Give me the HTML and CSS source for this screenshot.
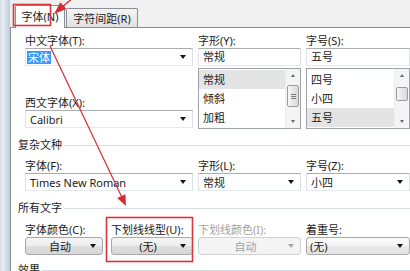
FILE: index.html
```html
<!DOCTYPE html>
<html lang="zh-CN">
<head>
<meta charset="utf-8">
<title>字体</title>
<link rel="stylesheet" href="styles.css">
</head>
<body>
<div class="window">
  <div class="frame-edge"></div>
  <div class="dialog">
    <div class="tabstrip">
      <div class="tab tab-font">字体(N)</div>
      <div class="tab tab-spacing">字符间距(R)</div>
    </div>
    <div class="panel">
      <div class="grid3">
        <div class="col">
          <div class="lbl">中文字体(T):</div>
          <div class="combo edit"><span class="sel">宋体</span><span class="arr"></span></div>
          <div class="lbl gap-x">西文字体(X):</div>
          <div class="combo edit"><span class="val">Calibri</span><span class="arr"></span></div>
        </div>
        <div class="col">
          <div class="lbl">字形(Y):</div>
          <div class="textbox">常规</div>
          <div class="listbox">
            <div class="items">
              <div class="hl">常规</div>
              <div>倾斜</div>
              <div>加粗</div>
            </div>
            <div class="vscroll">
              <div class="sb-btn"><span class="tri-up"></span></div>
              <div class="thumb thumb-big"><span class="grip"></span></div>
              <div class="sb-fill"></div>
              <div class="sb-btn"><span class="tri-down"></span></div>
            </div>
          </div>
        </div>
        <div class="col">
          <div class="lbl">字号(S):</div>
          <div class="textbox">五号</div>
          <div class="listbox">
            <div class="items">
              <div>四号</div>
              <div>小四</div>
              <div class="hl">五号</div>
            </div>
            <div class="vscroll">
              <div class="sb-btn"><span class="tri-up"></span></div>
              <div class="thumb thumb-small"></div>
              <div class="sb-fill"></div>
              <div class="sb-btn"><span class="tri-down"></span></div>
            </div>
          </div>
        </div>
      </div>

      <div class="group g-complex">复杂文种</div>
      <div class="grid3 sec2">
        <div class="col">
          <div class="lbl">字体(F):</div>
          <div class="combo edit"><span class="val">Times New Roman</span><span class="arr"></span></div>
        </div>
        <div class="col">
          <div class="lbl">字形(L):</div>
          <div class="combo edit"><span class="val">常规</span><span class="arr"></span></div>
        </div>
        <div class="col">
          <div class="lbl">字号(Z):</div>
          <div class="combo edit"><span class="val">小四</span><span class="arr"></span></div>
        </div>
      </div>

      <div class="group g-all">所有文字</div>
      <div class="grid4">
        <div class="col">
          <div class="lbl">字体颜色(C):</div>
          <div class="combo btn"><span class="txt">自动</span><span class="arr"></span></div>
        </div>
        <div class="col col-under">
          <div class="lbl">下划线线型(U):</div>
          <div class="combo btn"><span class="txt">(无)</span><span class="arr"></span></div>
        </div>
        <div class="col">
          <div class="lbl dim">下划线颜色(I):</div>
          <div class="combo btn disabled"><span class="txt">自动</span><span class="arr"></span></div>
        </div>
        <div class="col">
          <div class="lbl">着重号:</div>
          <div class="combo btn left"><span class="txt">(无)</span><span class="arr"></span></div>
        </div>
      </div>

      <div class="group g-effect">效果</div>
    </div>
  </div>

  <svg class="annot" width="410" height="271" viewBox="0 0 410 271">
    <rect x="13.5" y="4.5" width="37" height="21" fill="none" stroke="#d9353b" stroke-width="1.6"/>
    <rect x="106.5" y="217.5" width="86" height="44" fill="none" stroke="#d9353b" stroke-width="1.6"/>
    <line x1="73" y1="-2" x2="62" y2="7" stroke="#d62b30" stroke-width="1.3"/>
    <polygon points="54,14 66.3,9.1 60.3,2.3" fill="#d62b30"/>
    <line x1="50" y1="46" x2="121.5" y2="196.5" stroke="#d62b30" stroke-width="1.2"/>
    <polygon points="126,206 125.4,194.2 117.2,198" fill="#d62b30"/>
  </svg>
</div>
</body>
</html>
```

FILE: styles.css
```css
html, body {
  margin: 0;
  padding: 0;
}

body {
  width: 410px;
  height: 271px;
  overflow: hidden;
  background: #ffffff;
  color: #1b1b1b;
  font-family: "Noto Sans", "Noto Sans CJK SC", sans-serif;
  font-size: 11px;
}

.window {
  position: relative;
  display: flex;
  width: 410px;
  height: 271px;
}

.frame-edge {
  flex: none;
  width: 10px;
  background: linear-gradient(to right, #d3dce6 0, #e8edf2 3px, #d7e0e9 6px, #c2cfdc 9px, #c2cfdc 10px);
}

.dialog {
  flex: 1;
  min-width: 0;
  display: flex;
  flex-direction: column;
}

/* tabs */
.tabstrip {
  flex: none;
  height: 27px;
  display: flex;
  align-items: flex-end;
  padding-left: 5px;
  background: #f0f0f0;
}

.tab {
  box-sizing: border-box;
  border: 1px solid #898c95;
  border-bottom: none;
  text-align: center;
  white-space: nowrap;
}

.tab-font {
  width: 50px;
  height: 23px;
  line-height: 22px;
  margin-bottom: -1px;
  background: #ffffff;
  border-radius: 2px 2px 0 0;
  position: relative;
  z-index: 1;
}

.tab-spacing {
  width: 72px;
  height: 19px;
  line-height: 19px;
  margin-left: 1px;
  background: linear-gradient(#f4f4f4, #e1e1e1);
  border-radius: 2px 2px 0 0;
}

/* panel */
.panel {
  flex: 1;
  background: #ffffff;
  border-top: 1px solid #898c95;
  border-left: 1px solid #898c95;
  padding: 5px 0 0 14px;
}

.grid3 {
  display: grid;
  grid-template-columns: 168px 103px 104px;
  column-gap: 5px;
}

.grid4 {
  display: grid;
  grid-template-columns: 78px 85px 103px 104px;
  column-gap: 5px;
  margin-top: 7px;
}

.sec2 {
  margin-top: 6px;
}

.col {
  display: flex;
  flex-direction: column;
  min-width: 0;
}

.col-under {
  padding-left: 3px;
}

.lbl {
  height: 15px;
  line-height: 15px;
  white-space: nowrap;
}

.lbl.dim {
  color: #a2a2a2;
}

.gap-x {
  margin-top: 29px;
}

/* combos */
.combo {
  box-sizing: border-box;
  height: 18px;
  display: flex;
  align-items: center;
  white-space: nowrap;
  overflow: hidden;
}

.edit {
  background: #ffffff;
  border: 1px solid;
  border-color: #abadb3 #dbdfe6 #e3e9ef #e2e3ea;
  padding: 0 6px 0 1px;
}

.val {
  padding-left: 3px;
}

.sel {
  background: #3399ff;
  color: #ffffff;
  line-height: 13px;
  padding: 0 1px;
}

.arr {
  flex: none;
  width: 0;
  height: 0;
  margin-left: auto;
  border-left: 3.5px solid transparent;
  border-right: 3.5px solid transparent;
  border-top: 4px solid #151515;
}

.btn {
  border: 1px solid #a9a9a9;
  border-radius: 3px;
  background: linear-gradient(#f5f5f5 0%, #ededed 50%, #dfdfdf 51%, #d6d6d6 100%);
  padding: 0 6px 0 4px;
}

.btn .txt {
  flex: 1;
  text-align: center;
}

.btn.left .txt {
  text-align: left;
  padding-left: 0;
}

.btn.left {
  padding-left: 3px;
  background: linear-gradient(#fbfbfb 0%, #f3f3f3 50%, #e9e9e9 51%, #e3e3e3 100%);
}

.btn.disabled {
  background: #f4f4f4;
  border-color: #d2d2d2;
  color: #a3a3a3;
}

.btn.disabled .arr {
  border-top-color: #a9a9a9;
}

/* textbox + list */
.textbox {
  box-sizing: border-box;
  height: 18px;
  line-height: 16px;
  padding-left: 4px;
  background: #ffffff;
  border: 1px solid;
  border-color: #abadb3 #dbdfe6 #e3e9ef #e2e3ea;
}

.listbox {
  box-sizing: border-box;
  margin-top: 2px;
  height: 61px;
  display: flex;
  border: 1px solid #9ea3ab;
  background: #ffffff;
}

.items {
  flex: 1;
  padding-top: 1px;
  overflow: hidden;
}

.items div {
  height: 19px;
  line-height: 19px;
  padding-left: 4px;
}

.items .hl {
  background: #e4e4e4;
}

.vscroll {
  flex: none;
  width: 14px;
  display: flex;
  flex-direction: column;
  background: #f4f4f4;
  border-left: 1px solid #ededed;
}

.sb-btn {
  flex: none;
  height: 13px;
  display: flex;
  align-items: center;
  justify-content: center;
}

.sb-fill {
  flex: 1;
}

.tri-up {
  width: 0;
  height: 0;
  border-left: 2.5px solid transparent;
  border-right: 2.5px solid transparent;
  border-bottom: 3px solid #6a6a6a;
}

.tri-down {
  width: 0;
  height: 0;
  border-left: 2.5px solid transparent;
  border-right: 2.5px solid transparent;
  border-top: 3px solid #6a6a6a;
}

.thumb {
  box-sizing: border-box;
  margin: 0 1px;
  border: 1px solid #9c9c9c;
  border-radius: 2px;
  background: linear-gradient(to right, #f6f6f6, #dadada);
  display: flex;
  align-items: center;
  justify-content: center;
}

.thumb-big {
  margin-top: 3px;
  height: 22px;
}

.thumb-small {
  margin-top: 5px;
  height: 14px;
}

.grip {
  width: 5px;
  height: 5px;
  background: repeating-linear-gradient(#7a7a7a 0, #7a7a7a 1px, transparent 1px, transparent 2px);
}

/* group headings */
.group {
  display: flex;
  align-items: center;
  height: 14px;
  line-height: 14px;
  margin-left: -7px;
  white-space: nowrap;
}

.group::after {
  content: "";
  flex: 1;
  border-top: 1px solid #d5dfe5;
  margin-left: 2px;
}

.g-complex {
  margin-top: 9px;
}

.g-all {
  margin-top: 10px;
}

.g-effect {
  margin-top: 8px;
}

/* annotations */
.annot {
  position: absolute;
  left: 0;
  top: 0;
  pointer-events: none;
  z-index: 2;
}
```
